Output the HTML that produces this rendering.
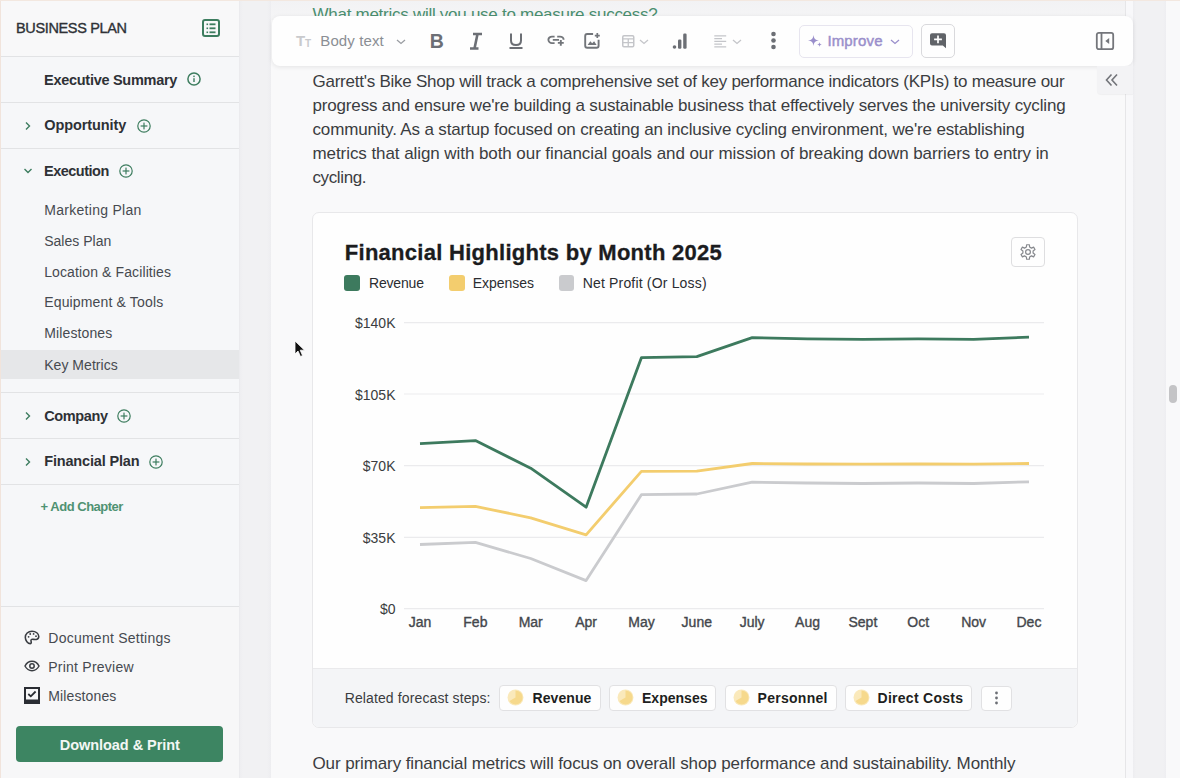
<!DOCTYPE html>
<html><head><meta charset="utf-8">
<style>
*{margin:0;padding:0;box-sizing:border-box}
html,body{width:1180px;height:778px;overflow:hidden;background:#f7f7f8;font-family:"Liberation Sans",sans-serif;color:#333;position:relative}
.a{position:absolute}
.t{position:absolute;white-space:nowrap}
svg{position:absolute;overflow:visible}
</style></head><body>
<div class="a" style="left:0;top:0;width:239px;height:778px;background:#f6f7f9"></div><div class="a" style="left:239px;top:0;width:1px;height:778px;background:#ebebee"></div><div class="a" style="left:240px;top:0;width:31px;height:778px;background:linear-gradient(to right,#eeeef1 0,#f1f1f3 3px,#f1f1f3 27px,#ededf0 31px)"></div><div class="a" style="left:271px;top:0;width:854px;height:778px;background:#f9f9fa"></div><div class="a" style="left:271px;top:0;width:862px;height:20px;background:linear-gradient(#f2f2f4,#f5f5f6)"></div><div class="a" style="left:1124.5px;top:0;width:1px;height:778px;background:#e6e6e8"></div><div class="a" style="left:1125.5px;top:0;width:7.5px;height:778px;background:#f8f8fa"></div><div class="a" style="left:1133px;top:0;width:33px;height:778px;background:linear-gradient(to right,#ededf0 0,#f1f1f3 3px,#f1f1f3 30px,#eeeef1 33px)"></div><div class="a" style="left:1166px;top:0;width:14px;height:778px;background:#f9f9fa"></div><div class="a" style="left:1169px;top:385px;width:8px;height:18px;background:#c4c4c6;border-radius:4px"></div><div class="a" style="left:0;top:0;width:239px;height:56px;background:#f8f8f9"></div><div class="t" style="left:16.00px;top:20.46px;font-size:14.5px;line-height:16.21px;font-weight:normal;color:#2e3136;letter-spacing:-0.353px;-webkit-text-stroke:0.35px #2e3136">BUSINESS PLAN</div>
<svg style="left:201px;top:18px" width="20" height="20" viewBox="0 0 20 20"><rect x="2" y="2" width="16" height="16" rx="2" fill="none" stroke="#3d7d5f" stroke-width="2"/><rect x="5.5" y="5.5" width="1.6" height="1.6" fill="#3d7d5f"/><rect x="5.5" y="9.5" width="1.6" height="1.6" fill="#3d7d5f"/><rect x="5.5" y="13.5" width="1.6" height="1.6" fill="#3d7d5f"/><rect x="8.5" y="5.4" width="6" height="1.8" fill="#3d7d5f"/><rect x="8.5" y="9.4" width="6" height="1.8" fill="#3d7d5f"/><rect x="8.5" y="13.4" width="6" height="1.8" fill="#3d7d5f"/></svg><div class="a" style="left:0;top:56px;width:239px;height:1px;background:#e2e3e5"></div><div class="t" style="left:44.00px;top:71.66px;font-size:14.5px;line-height:16.21px;font-weight:bold;color:#2e3136;letter-spacing:-0.276px;">Executive Summary</div>
<svg style="left:186px;top:71.2px" width="16" height="16" viewBox="0 0 16 16"><circle cx="8" cy="8" r="6.1" fill="none" stroke="#3d7d5f" stroke-width="1.5"/><rect x="7.3" y="7.2" width="1.4" height="3.8" fill="#3d7d5f"/><rect x="7.3" y="4.6" width="1.4" height="1.5" fill="#3d7d5f"/></svg><div class="a" style="left:0;top:102px;width:239px;height:1px;background:#e2e3e5"></div><svg style="left:24px;top:121px" width="8" height="10" viewBox="0 0 8 10"><path d="M2 1.5 L5.5 5 L2 8.5" fill="none" stroke="#3d7d5f" stroke-width="1.4"/></svg><div class="t" style="left:44.30px;top:117.16px;font-size:14.5px;line-height:16.21px;font-weight:bold;color:#2e3136;letter-spacing:-0.095px;">Opportunity</div>
<svg style="left:135.5px;top:117.8px" width="16" height="16" viewBox="0 0 16 16"><circle cx="8" cy="8" r="6.2" fill="none" stroke="#3d7d5f" stroke-width="1.2"/><rect x="7.4" y="4.6" width="1.2" height="6.8" fill="#3d7d5f"/><rect x="4.6" y="7.4" width="6.8" height="1.2" fill="#3d7d5f"/></svg><div class="a" style="left:0;top:148px;width:239px;height:1px;background:#e2e3e5"></div><svg style="left:23px;top:167px" width="10" height="8" viewBox="0 0 10 8"><path d="M1.5 2 L5 5.5 L8.5 2" fill="none" stroke="#3d7d5f" stroke-width="1.4"/></svg><div class="t" style="left:44.00px;top:163.36px;font-size:14.5px;line-height:16.21px;font-weight:bold;color:#2e3136;letter-spacing:-0.499px;">Execution</div>
<svg style="left:117.8px;top:163.3px" width="16" height="16" viewBox="0 0 16 16"><circle cx="8" cy="8" r="6.2" fill="none" stroke="#3d7d5f" stroke-width="1.2"/><rect x="7.4" y="4.6" width="1.2" height="6.8" fill="#3d7d5f"/><rect x="4.6" y="7.4" width="6.8" height="1.2" fill="#3d7d5f"/></svg><div class="t" style="left:44.20px;top:202.82px;font-size:14px;line-height:15.65px;font-weight:normal;color:#464a50;letter-spacing:0.294px;">Marketing Plan</div>
<div class="t" style="left:44.20px;top:233.62px;font-size:14px;line-height:15.65px;font-weight:normal;color:#464a50;letter-spacing:0.018px;">Sales Plan</div>
<div class="t" style="left:44.20px;top:264.52px;font-size:14px;line-height:15.65px;font-weight:normal;color:#464a50;letter-spacing:0.115px;">Location &amp; Facilities</div>
<div class="t" style="left:44.20px;top:295.32px;font-size:14px;line-height:15.65px;font-weight:normal;color:#464a50;letter-spacing:0.157px;">Equipment &amp; Tools</div>
<div class="t" style="left:44.20px;top:326.12px;font-size:14px;line-height:15.65px;font-weight:normal;color:#464a50;letter-spacing:0.131px;">Milestones</div>
<div class="a" style="left:0;top:350px;width:239px;height:29px;background:#e6e7e9"></div><div class="t" style="left:44.20px;top:357.62px;font-size:14px;line-height:15.65px;font-weight:normal;color:#464a50;letter-spacing:0.038px;">Key Metrics</div>
<div class="a" style="left:0;top:392px;width:239px;height:1px;background:#e2e3e5"></div><svg style="left:24px;top:411px" width="8" height="10" viewBox="0 0 8 10"><path d="M2 1.5 L5.5 5 L2 8.5" fill="none" stroke="#3d7d5f" stroke-width="1.4"/></svg><div class="t" style="left:44.20px;top:408.26px;font-size:14.5px;line-height:16.21px;font-weight:bold;color:#2e3136;letter-spacing:-0.377px;">Company</div>
<svg style="left:116px;top:407.6px" width="16" height="16" viewBox="0 0 16 16"><circle cx="8" cy="8" r="6.2" fill="none" stroke="#3d7d5f" stroke-width="1.2"/><rect x="7.4" y="4.6" width="1.2" height="6.8" fill="#3d7d5f"/><rect x="4.6" y="7.4" width="6.8" height="1.2" fill="#3d7d5f"/></svg><div class="a" style="left:0;top:438px;width:239px;height:1px;background:#e2e3e5"></div><svg style="left:24px;top:457px" width="8" height="10" viewBox="0 0 8 10"><path d="M2 1.5 L5.5 5 L2 8.5" fill="none" stroke="#3d7d5f" stroke-width="1.4"/></svg><div class="t" style="left:44.20px;top:453.26px;font-size:14.5px;line-height:16.21px;font-weight:bold;color:#2e3136;letter-spacing:-0.161px;">Financial Plan</div>
<svg style="left:147.8px;top:453.5px" width="16" height="16" viewBox="0 0 16 16"><circle cx="8" cy="8" r="6.2" fill="none" stroke="#3d7d5f" stroke-width="1.2"/><rect x="7.4" y="4.6" width="1.2" height="6.8" fill="#3d7d5f"/><rect x="4.6" y="7.4" width="6.8" height="1.2" fill="#3d7d5f"/></svg><div class="a" style="left:0;top:484px;width:239px;height:1px;background:#e2e3e5"></div><div class="t" style="left:40.60px;top:500.02px;font-size:13px;line-height:14.53px;font-weight:bold;color:#4f9272;letter-spacing:-0.494px;">+ Add Chapter</div>
<div class="a" style="left:0;top:606px;width:239px;height:1px;background:#e2e3e5"></div><div class="a" style="left:0;top:607px;width:239px;height:171px;background:#f7f7f8"></div><div class="t" style="left:48.30px;top:630.82px;font-size:14px;line-height:15.65px;font-weight:normal;color:#464a50;letter-spacing:0.245px;">Document Settings</div>
<div class="t" style="left:48.30px;top:659.52px;font-size:14px;line-height:15.65px;font-weight:normal;color:#464a50;letter-spacing:0.232px;">Print Preview</div>
<div class="t" style="left:48.30px;top:688.82px;font-size:14px;line-height:15.65px;font-weight:normal;color:#464a50;letter-spacing:0.120px;">Milestones</div>
<svg style="left:24px;top:630px" width="16" height="15" viewBox="0 0 16 15"><path d="M8 1.2 C4 1.2 1.3 4 1.3 7.3 C1.3 10.6 3.8 13.6 6.3 13.6 C7.6 13.6 7.3 12 7 11 C6.7 10 7.4 9.2 8.6 9.3 C10 9.4 11 9.6 12.4 9.4 C14 9.1 14.8 8 14.8 6.6 C14.8 3.5 11.8 1.2 8 1.2 Z" fill="none" stroke="#3a3d42" stroke-width="1.55"/><circle cx="4.6" cy="6.8" r="0.9" fill="#3a3d42"/><circle cx="6.2" cy="4" r="0.9" fill="#3a3d42"/><circle cx="9.6" cy="3.9" r="0.9" fill="#3a3d42"/><circle cx="12" cy="6.2" r="0.9" fill="#3a3d42"/></svg><svg style="left:24px;top:660px" width="16" height="12" viewBox="0 0 16 12"><path d="M1 6 C3 2.2 5.5 1.3 8 1.3 C10.5 1.3 13 2.2 15 6 C13 9.8 10.5 10.7 8 10.7 C5.5 10.7 3 9.8 1 6 Z" fill="none" stroke="#3a3d42" stroke-width="1.5"/><circle cx="8" cy="6" r="2.2" fill="none" stroke="#3a3d42" stroke-width="1.5"/></svg><svg style="left:24px;top:687px" width="16" height="17" viewBox="0 0 16 17"><rect x="1" y="1" width="14" height="15" fill="none" stroke="#2a2d33" stroke-width="2"/><rect x="1" y="12.5" width="14" height="3.5" fill="#2a2d33"/><path d="M4.3 7 L6.8 9.3 L11.6 4.5" fill="none" stroke="#2a2d33" stroke-width="1.8"/></svg><div class="a" style="left:16px;top:726px;width:207px;height:36px;background:#3d8562;border-radius:4px"></div><div class="t" style="left:59.80px;top:736.66px;font-size:14.5px;line-height:16.21px;font-weight:bold;color:#f3f7f4;letter-spacing:-0.049px;">Download &amp; Print</div>
<div class="t" style="left:312.50px;top:5.10px;font-size:17px;line-height:19.01px;font-weight:normal;color:#4b8f70;letter-spacing:-0.271px;">What metrics will you use to measure success?</div>
<div class="t" style="left:312.50px;top:72.40px;font-size:17px;line-height:19.01px;font-weight:normal;color:#3b3d41;letter-spacing:-0.246px;">Garrett's Bike Shop will track a comprehensive set of key performance indicators (KPIs) to measure our</div>
<div class="t" style="left:312.50px;top:96.40px;font-size:17px;line-height:19.01px;font-weight:normal;color:#3b3d41;letter-spacing:-0.166px;">progress and ensure we're building a sustainable business that effectively serves the university cycling</div>
<div class="t" style="left:312.50px;top:120.40px;font-size:17px;line-height:19.01px;font-weight:normal;color:#3b3d41;letter-spacing:-0.144px;">community. As a startup focused on creating an inclusive cycling environment, we're establishing</div>
<div class="t" style="left:312.50px;top:144.40px;font-size:17px;line-height:19.01px;font-weight:normal;color:#3b3d41;letter-spacing:-0.073px;">metrics that align with both our financial goals and our mission of breaking down barriers to entry in</div>
<div class="t" style="left:312.50px;top:168.40px;font-size:17px;line-height:19.01px;font-weight:normal;color:#3b3d41;letter-spacing:-0.383px;">cycling.</div>
<div class="a" style="left:272px;top:16px;width:861px;height:50px;background:#fefefe;border-radius:8px;box-shadow:0 1px 5px rgba(0,0,0,0.09)"></div><div class="a" style="left:1097px;top:66px;width:36px;height:28px;background:#f3f3f5;border-bottom-left-radius:4px;box-shadow:0 1px 1px rgba(0,0,0,0.04)"></div><svg style="left:1104px;top:72px" width="16" height="16" viewBox="0 0 16 16"><path d="M7.5 2.5 L2.5 8 L7.5 13.5 M13 2.5 L8 8 L13 13.5" fill="none" stroke="#727479" stroke-width="1.6"/></svg><div class="a" style="left:311.5px;top:212px;width:766px;height:516px;background:#fefefe;border:1px solid #e8e8ea;border-radius:7px;overflow:hidden"><div class="a" style="left:0;top:455px;width:766px;height:60px;background:#f4f5f7;border-top:1px solid #eaeaec"></div></div><div class="t" style="left:296.00px;top:33.21px;font-size:15px;line-height:16.77px;font-weight:bold;color:#c9cacd;letter-spacing:0.000px;">T</div>
<div class="t" style="left:305.00px;top:37.74px;font-size:10px;line-height:11.18px;font-weight:bold;color:#c9cacd;letter-spacing:0.000px;">T</div>
<div class="t" style="left:320.30px;top:32.71px;font-size:15px;line-height:16.77px;font-weight:normal;color:#8b8e94;letter-spacing:0.108px;">Body text</div>
<svg style="left:395.5px;top:38.5px" width="10" height="6" viewBox="0 0 10 6"><path d="M1 1 L5.0 4.5 L9 1" fill="none" stroke="#9a9da2" stroke-width="1.3"/></svg><div class="t" style="left:429.70px;top:30.83px;font-size:19.5px;line-height:21.80px;font-weight:bold;color:#6c6f75;letter-spacing:0.000px;">B</div>
<svg style="left:467px;top:32px" width="18" height="18" viewBox="0 0 18 18"><path d="M6 2 H15 M3 16.5 H11.5 M10.5 2 L7.5 16.5" fill="none" stroke="#6c6f75" stroke-width="2.6"/></svg><svg style="left:508px;top:32px" width="16" height="18" viewBox="0 0 16 18"><path d="M3 1.5 V8.5 C3 11.5 5 13 8 13 C11 13 13 11.5 13 8.5 V1.5" fill="none" stroke="#6c6f75" stroke-width="2"/><rect x="1.5" y="15" width="13" height="2" fill="#6c6f75"/></svg><svg style="left:547px;top:34px" width="19" height="14" viewBox="0 0 19 14"><path d="M7.6 2.6 H5 C3 2.6 1.4 4.1 1.4 5.85 C1.4 7.6 3 9.1 5 9.1 H7.6 M10.2 2.6 H13 C15 2.6 16.6 4.1 16.6 5.85 M5.8 5.85 H12" fill="none" stroke="#72757a" stroke-width="1.9"/><path d="M13.8 5.9 V11.8 M10.85 8.85 H16.75" stroke="#72757a" stroke-width="1.9"/></svg><svg style="left:583px;top:32px" width="19" height="18" viewBox="0 0 19 18"><path d="M10.1 2 H4.2 Q2.2 2 2.2 4 V13.7 Q2.2 15.7 4.2 15.7 H13.6 Q15.6 15.7 15.6 13.7 V7.8" fill="none" stroke="#72757a" stroke-width="1.9"/><path d="M4.6 12.9 L7.3 9.3 L9.2 11.3 L11.1 9.3 L13.6 12.9 Z" fill="#72757a"/><path d="M14.3 1.1 V6.1 M11.8 3.6 H16.8" stroke="#72757a" stroke-width="1.7"/></svg><svg style="left:621.5px;top:34.8px" width="13" height="13" viewBox="0 0 13 13"><rect x="0.75" y="0.75" width="11" height="11" rx="1.2" fill="none" stroke="#c4c5c9" stroke-width="1.5"/><path d="M0.75 3.9 H11.75 M0.75 7.6 H11.75 M6.25 3.9 V11.75" stroke="#c4c5c9" stroke-width="1.3"/></svg><svg style="left:639px;top:38.5px" width="10" height="6" viewBox="0 0 10 6"><path d="M1 1 L5.0 4.5 L9 1" fill="none" stroke="#c4c5c9" stroke-width="1.3"/></svg><svg style="left:672px;top:32px" width="16" height="18" viewBox="0 0 16 18"><circle cx="2.5" cy="15" r="1.8" fill="#6c6f75"/><rect x="6" y="7.5" width="3.4" height="9.3" rx="1.2" fill="#6c6f75"/><rect x="11.2" y="1.5" width="3.4" height="15.3" rx="1.2" fill="#6c6f75"/></svg><svg style="left:713.5px;top:34.5px" width="14" height="13" viewBox="0 0 14 13"><path d="M0.3 0.9 H12.2 M0.3 3.6 H8 M0.3 6.35 H12.2 M0.3 9.1 H8 M0.3 11.9 H12.2" stroke="#c4c5c9" stroke-width="1.2"/></svg><svg style="left:731.5px;top:38.5px" width="10" height="6" viewBox="0 0 10 6"><path d="M1 1 L5.0 4.5 L9 1" fill="none" stroke="#c4c5c9" stroke-width="1.3"/></svg><svg style="left:769px;top:31px" width="9" height="19" viewBox="0 0 9 19"><circle cx="4.5" cy="3" r="2.3" fill="#6c6f75"/><circle cx="4.5" cy="9.5" r="2.3" fill="#6c6f75"/><circle cx="4.5" cy="16" r="2.3" fill="#6c6f75"/></svg><div class="a" style="left:798.5px;top:24.5px;width:114px;height:33px;border:1px solid #e7e5ef;border-radius:5px;background:#fefefe"></div><svg style="left:808px;top:35px" width="14" height="12" viewBox="0 0 14 12"><path d="M5.5 0 C6.1 3.9 7.1 4.9 11 5.5 C7.1 6.1 6.1 7.1 5.5 11 C4.9 7.1 3.9 6.1 0 5.5 C3.9 4.9 4.9 3.9 5.5 0 Z" fill="#9a8fcb"/><path d="M11.5 7 C11.8 8.9 12.1 9.2 14 9.5 C12.1 9.8 11.8 10.1 11.5 12 C11.2 10.1 10.9 9.8 9 9.5 C10.9 9.2 11.2 8.9 11.5 7 Z" fill="#9a8fcb"/></svg><div class="t" style="left:827.40px;top:32.81px;font-size:15px;line-height:16.77px;font-weight:normal;color:#9a8fcb;letter-spacing:0.153px;-webkit-text-stroke:0.45px #9a8fcb">Improve</div>
<svg style="left:890px;top:38.5px" width="10" height="6" viewBox="0 0 10 6"><path d="M1 1 L5.0 4.5 L9 1" fill="none" stroke="#9a8fcb" stroke-width="1.3"/></svg><div class="a" style="left:921px;top:24px;width:34px;height:34px;border:1px solid #d9d9dc;border-radius:5px;background:#fefefe"></div><svg style="left:929.5px;top:32.8px" width="17" height="16" viewBox="0 0 17 16"><path d="M2 0.3 H14 Q16 0.3 16 2.3 V15.3 L12.8 12.5 H2 Q0 12.5 0 10.5 V2.3 Q0 0.3 2 0.3 Z" fill="#606368"/><path d="M8 2.5 V10.3 M4.1 6.4 H11.9" stroke="#fff" stroke-width="1.7"/></svg><svg style="left:1095px;top:31px" width="20" height="20" viewBox="0 0 20 20"><rect x="1.8" y="1.8" width="16.4" height="16.4" rx="2" fill="none" stroke="#74767b" stroke-width="1.8"/><path d="M6.5 1.8 V18.2" stroke="#74767b" stroke-width="1.8"/><path d="M14.2 7 L10.3 10 L14.2 13 Z" fill="#74767b"/></svg><div class="t" style="left:344.80px;top:240.67px;font-size:22px;line-height:24.60px;font-weight:bold;color:#1b1c1e;letter-spacing:0.275px;-webkit-text-stroke:0.3px #1b1c1e">Financial Highlights by Month 2025</div>
<div class="a" style="left:1011px;top:236.8px;width:34px;height:30px;border:1px solid #dedee0;border-radius:4px;background:#fefefe"></div><svg style="left:1018.8px;top:243px" width="18" height="18" viewBox="0 0 18 18"><path d="M7.39 4.05 L7.61 1.73 L10.39 1.73 L10.61 4.05 L12.48 5.14 L14.60 4.16 L15.99 6.57 L14.09 7.92 L14.09 10.08 L15.99 11.43 L14.60 13.84 L12.48 12.86 L10.61 13.95 L10.39 16.27 L7.61 16.27 L7.39 13.95 L5.52 12.86 L3.40 13.84 L2.01 11.43 L3.91 10.08 L3.91 7.92 L2.01 6.57 L3.40 4.16 L5.52 5.14 Z" fill="none" stroke="#86888d" stroke-width="1.2" stroke-linejoin="round"/><circle cx="9" cy="9" r="2.4" fill="none" stroke="#86888d" stroke-width="1.2"/></svg><div class="a" style="left:344px;top:275px;width:15.5px;height:15.5px;border-radius:3px;background:#3d7a5e"></div><div class="t" style="left:369.00px;top:276.02px;font-size:14px;line-height:15.65px;font-weight:normal;color:#2b2d31;letter-spacing:-0.174px;">Revenue</div>
<div class="a" style="left:449px;top:275px;width:15.5px;height:15.5px;border-radius:3px;background:#f3cd6e"></div><div class="t" style="left:472.70px;top:276.02px;font-size:14px;line-height:15.65px;font-weight:normal;color:#2b2d31;letter-spacing:-0.027px;">Expenses</div>
<div class="a" style="left:558.5px;top:275px;width:15.5px;height:15.5px;border-radius:3px;background:#cacbce"></div><div class="t" style="left:582.70px;top:276.02px;font-size:14px;line-height:15.65px;font-weight:normal;color:#2b2d31;letter-spacing:0.175px;">Net Profit (Or Loss)</div>
<svg style="left:0;top:0" width="1180" height="778" viewBox="0 0 1180 778"><line x1="404" y1="322.7" x2="1044" y2="322.7" stroke="#ebebed" stroke-width="1.2"/><line x1="404" y1="394" x2="1044" y2="394" stroke="#ebebed" stroke-width="1.2"/><line x1="404" y1="465.6" x2="1044" y2="465.6" stroke="#ebebed" stroke-width="1.2"/><line x1="404" y1="537.3" x2="1044" y2="537.3" stroke="#ebebed" stroke-width="1.2"/><line x1="404" y1="608.6" x2="1044" y2="608.6" stroke="#ebebed" stroke-width="1.2"/><polyline points="420.0,544.5 475.4,542.4 530.7,558.5 586.1,580.6 641.4,494.7 696.8,494.0 752.2,482.2 807.5,483.0 862.9,483.5 918.2,483.0 973.6,483.5 1029.0,481.8" fill="none" stroke="#cacbce" stroke-width="2.8" stroke-linejoin="round"/><polyline points="420.0,507.6 475.4,506.4 530.7,517.8 586.1,534.8 641.4,471.4 696.8,471.2 752.2,463.5 807.5,464.0 862.9,464.2 918.2,464.0 973.6,464.2 1029.0,463.5" fill="none" stroke="#f3cd6e" stroke-width="2.8" stroke-linejoin="round"/><polyline points="420.0,443.6 475.4,440.6 530.7,468.2 586.1,507.2 641.4,357.7 696.8,356.6 752.2,337.6 807.5,338.8 862.9,339.3 918.2,338.8 973.6,339.3 1029.0,337.1" fill="none" stroke="#3d7a5e" stroke-width="2.8" stroke-linejoin="round"/></svg><div class="t" style="left:355.01px;top:316.32px;font-size:14px;line-height:15.65px;font-weight:normal;color:#3a3c40;letter-spacing:0.000px;">$140K</div>
<div class="t" style="left:355.01px;top:387.62px;font-size:14px;line-height:15.65px;font-weight:normal;color:#3a3c40;letter-spacing:0.000px;">$105K</div>
<div class="t" style="left:362.81px;top:459.22px;font-size:14px;line-height:15.65px;font-weight:normal;color:#3a3c40;letter-spacing:0.000px;">$70K</div>
<div class="t" style="left:362.81px;top:530.92px;font-size:14px;line-height:15.65px;font-weight:normal;color:#3a3c40;letter-spacing:0.000px;">$35K</div>
<div class="t" style="left:379.93px;top:602.22px;font-size:14px;line-height:15.65px;font-weight:normal;color:#3a3c40;letter-spacing:-0.000px;">$0</div>
<div class="t" style="left:408.72px;top:615.32px;font-size:14px;line-height:15.65px;font-weight:normal;color:#44474c;letter-spacing:-0.000px;-webkit-text-stroke:0.35px #44474c">Jan</div>
<div class="t" style="left:463.30px;top:615.32px;font-size:14px;line-height:15.65px;font-weight:normal;color:#44474c;letter-spacing:-0.000px;-webkit-text-stroke:0.35px #44474c">Feb</div>
<div class="t" style="left:518.67px;top:615.32px;font-size:14px;line-height:15.65px;font-weight:normal;color:#44474c;letter-spacing:-0.000px;-webkit-text-stroke:0.35px #44474c">Mar</div>
<div class="t" style="left:575.19px;top:615.32px;font-size:14px;line-height:15.65px;font-weight:normal;color:#44474c;letter-spacing:0.000px;-webkit-text-stroke:0.35px #44474c">Apr</div>
<div class="t" style="left:628.22px;top:615.32px;font-size:14px;line-height:15.65px;font-weight:normal;color:#44474c;letter-spacing:-0.000px;-webkit-text-stroke:0.35px #44474c">May</div>
<div class="t" style="left:681.62px;top:615.32px;font-size:14px;line-height:15.65px;font-weight:normal;color:#44474c;letter-spacing:0.000px;-webkit-text-stroke:0.35px #44474c">June</div>
<div class="t" style="left:739.71px;top:615.32px;font-size:14px;line-height:15.65px;font-weight:normal;color:#44474c;letter-spacing:0.000px;-webkit-text-stroke:0.35px #44474c">July</div>
<div class="t" style="left:795.07px;top:615.32px;font-size:14px;line-height:15.65px;font-weight:normal;color:#44474c;letter-spacing:-0.000px;-webkit-text-stroke:0.35px #44474c">Aug</div>
<div class="t" style="left:848.48px;top:615.32px;font-size:14px;line-height:15.65px;font-weight:normal;color:#44474c;letter-spacing:0.000px;-webkit-text-stroke:0.35px #44474c">Sept</div>
<div class="t" style="left:907.35px;top:615.32px;font-size:14px;line-height:15.65px;font-weight:normal;color:#44474c;letter-spacing:0.000px;-webkit-text-stroke:0.35px #44474c">Oct</div>
<div class="t" style="left:961.15px;top:615.32px;font-size:14px;line-height:15.65px;font-weight:normal;color:#44474c;letter-spacing:0.000px;-webkit-text-stroke:0.35px #44474c">Nov</div>
<div class="t" style="left:1016.51px;top:615.32px;font-size:14px;line-height:15.65px;font-weight:normal;color:#44474c;letter-spacing:-0.000px;-webkit-text-stroke:0.35px #44474c">Dec</div>
<div class="t" style="left:344.70px;top:691.32px;font-size:14px;line-height:15.65px;font-weight:normal;color:#3a3c40;letter-spacing:0.119px;">Related forecast steps:</div>
<div class="a" style="left:499.3px;top:685.2px;width:101.40000000000003px;height:25.5px;border:1px solid #e1e1e3;border-radius:4px;background:#fefefe"></div><svg style="left:507.1px;top:689.1px" width="17" height="17" viewBox="0 0 17 17"><circle cx="8.5" cy="8.5" r="8" fill="#fae9bb"/><path d="M8.5 8.5 V1.5 A7 7 0 1 1 2.5 12 Z" fill="#f6d98c"/></svg><div class="t" style="left:532.50px;top:690.82px;font-size:14px;line-height:15.65px;font-weight:bold;color:#1e1f21;letter-spacing:0.091px;">Revenue</div>
<div class="a" style="left:609.3px;top:685.2px;width:107.20000000000005px;height:25.5px;border:1px solid #e1e1e3;border-radius:4px;background:#fefefe"></div><svg style="left:617.0999999999999px;top:689.1px" width="17" height="17" viewBox="0 0 17 17"><circle cx="8.5" cy="8.5" r="8" fill="#fae9bb"/><path d="M8.5 8.5 V1.5 A7 7 0 1 1 2.5 12 Z" fill="#f6d98c"/></svg><div class="t" style="left:642.00px;top:690.82px;font-size:14px;line-height:15.65px;font-weight:bold;color:#1e1f21;letter-spacing:0.019px;">Expenses</div>
<div class="a" style="left:725px;top:685.2px;width:111.5px;height:25.5px;border:1px solid #e1e1e3;border-radius:4px;background:#fefefe"></div><svg style="left:732.8px;top:689.1px" width="17" height="17" viewBox="0 0 17 17"><circle cx="8.5" cy="8.5" r="8" fill="#fae9bb"/><path d="M8.5 8.5 V1.5 A7 7 0 1 1 2.5 12 Z" fill="#f6d98c"/></svg><div class="t" style="left:757.50px;top:690.82px;font-size:14px;line-height:15.65px;font-weight:bold;color:#1e1f21;letter-spacing:0.289px;">Personnel</div>
<div class="a" style="left:845px;top:685.2px;width:127px;height:25.5px;border:1px solid #e1e1e3;border-radius:4px;background:#fefefe"></div><svg style="left:852.8px;top:689.1px" width="17" height="17" viewBox="0 0 17 17"><circle cx="8.5" cy="8.5" r="8" fill="#fae9bb"/><path d="M8.5 8.5 V1.5 A7 7 0 1 1 2.5 12 Z" fill="#f6d98c"/></svg><div class="t" style="left:877.50px;top:690.82px;font-size:14px;line-height:15.65px;font-weight:bold;color:#1e1f21;letter-spacing:0.275px;">Direct Costs</div>
<div class="a" style="left:981px;top:685.5px;width:31px;height:25.5px;border:1px solid #e1e1e3;border-radius:4px;background:#fefefe"></div><svg style="left:994px;top:690px" width="5" height="16" viewBox="0 0 5 16"><circle cx="2.5" cy="3" r="1.4" fill="#6c6f75"/><circle cx="2.5" cy="8" r="1.4" fill="#6c6f75"/><circle cx="2.5" cy="13" r="1.4" fill="#6c6f75"/></svg><div class="t" style="left:312.50px;top:753.80px;font-size:17px;line-height:19.01px;font-weight:normal;color:#3b3d41;letter-spacing:-0.106px;">Our primary financial metrics will focus on overall shop performance and sustainability. Monthly</div>
<svg style="left:294px;top:340px" width="12" height="18" viewBox="0 0 12 18"><path d="M1 1 L1 14 L4 11 L6.5 16.5 L8.5 15.5 L6.2 10.2 L10.5 10.2 Z" fill="#111" stroke="#fff" stroke-width="0.8"/></svg><div class="a" style="left:0;top:0;width:1px;height:778px;background:#f1e4dc"></div><div class="a" style="left:0;top:0;width:1180px;height:1px;background:#f3e8e0"></div></body></html>
